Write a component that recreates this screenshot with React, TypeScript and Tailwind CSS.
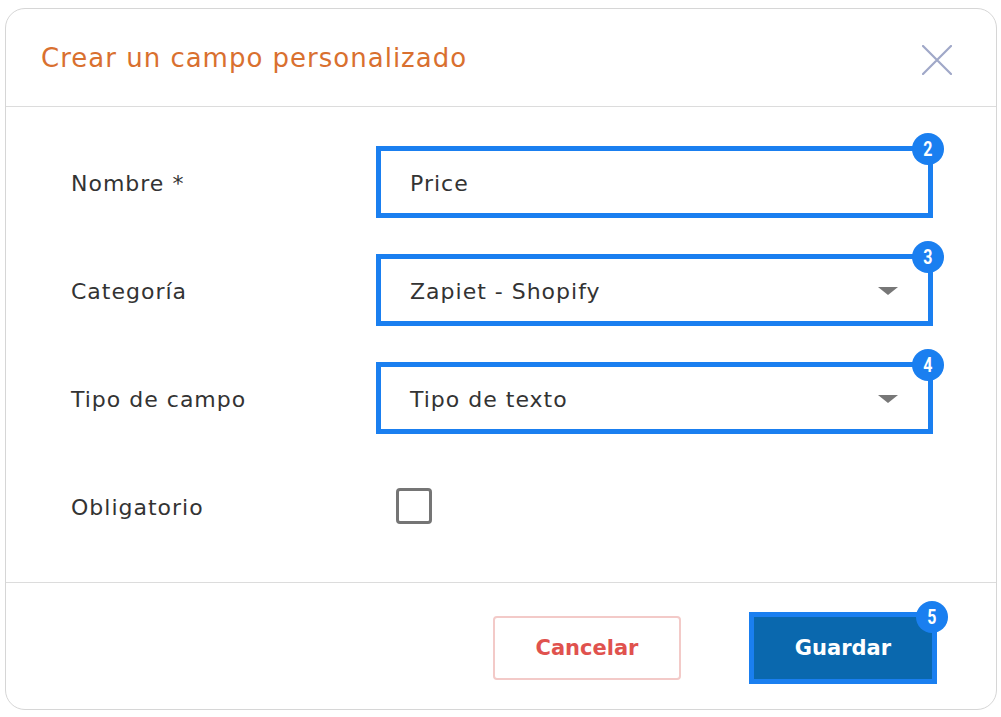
import React from 'react'

const font = { fontFamily: '"DejaVu Sans", "Noto Sans", sans-serif' }

function Badge({ n, className }: { n: number; className: string }) {
  return (
    <span
      className={`absolute flex h-[32px] w-[32px] items-center justify-center rounded-full bg-[#1a7ff0] text-[20px] font-bold leading-none text-white ${className}`}
      style={{ fontFamily: 'Roboto, "Liberation Sans", sans-serif' }}
    >
      <span className="inline-block scale-x-[0.8]">{n}</span>
    </span>
  )
}

function Caret() {
  return (
    <svg width="20" height="8" viewBox="0 0 20 8" className="shrink-0">
      <path d="M0 0 L20 0 L10 8 Z" fill="#777777" />
    </svg>
  )
}

function Field({ label, badge, children }: { label: string; badge?: number; children: React.ReactNode }) {
  return (
    <div className="flex h-[72px] items-center">
      <div className="w-[305px] pt-[2px] text-[22px] tracking-[1px] text-[#333]">{label}</div>
      <div className="relative flex-1 self-stretch">{children}{badge && <Badge n={badge} className="right-[-11px] top-[-13px]" />}</div>
    </div>
  )
}

const box = 'flex h-full items-center border-[5px] border-[#1a7ff0] pl-[29px] pt-[2px] text-[22px] tracking-[1px] text-[#333]'

export default function App() {
  return (
    <div className="min-h-[717px] bg-white pl-[5px] pt-[8px]" style={font}>
      <div className="flex h-[702px] w-[992px] flex-col rounded-[20px] border border-[#d6d6d6] bg-white">
        <div className="flex h-[98px] shrink-0 items-center justify-between border-b border-[#dcdcdc] pl-[35px] pr-[44px]">
          <h1 className="pt-[2px] text-[26px] tracking-[1px] text-[#d9702f]">Crear un campo personalizado</h1>
          <svg width="30" height="30" viewBox="0 0 30 30" className="mt-[4px]">
            <path d="M1 1 L29 29 M29 1 L1 29" stroke="#a0a8c8" strokeWidth="2.2" strokeLinecap="round" />
          </svg>
        </div>

        <div className="flex flex-col gap-[36px] border-b border-[#dcdcdc] pb-[40px] pl-[65px] pr-[63px] pt-[39px]">
          <Field label="Nombre *" badge={2}>
            <div className={box}>Price</div>
          </Field>
          <Field label="Categoría" badge={3}>
            <div className={`${box} justify-between pr-[30px]`}>
              <span>Zapiet - Shopify</span>
              <Caret />
            </div>
          </Field>
          <Field label="Tipo de campo" badge={4}>
            <div className={`${box} justify-between pr-[30px]`}>
              <span>Tipo de texto</span>
              <Caret />
            </div>
          </Field>
          <Field label="Obligatorio">
            <div className="flex h-full items-center pl-[20px]">
              <div className="h-[36px] w-[36px] rounded-[4px] border-[3px] border-[#757575]" />
            </div>
          </Field>
        </div>

        <div className="flex flex-1 items-center justify-end gap-[68px] pr-[59px] pt-[3px]">
          <button className="flex h-[64px] w-[188px] items-center justify-center rounded-[4px] border-2 border-[#f3cac8] pt-[2px] text-[21px] font-bold text-[#e0524e]">
            Cancelar
          </button>
          <div className="relative">
            <button className="flex h-[72px] w-[188px] items-center justify-center border-[5px] border-[#1a7ff0] bg-[#0a68ae] pt-[2px] text-[21px] font-bold text-white">
              Guardar
            </button>
            <Badge n={5} className="right-[-11px] top-[-11px]" />
          </div>
        </div>
      </div>
    </div>
  )
}
